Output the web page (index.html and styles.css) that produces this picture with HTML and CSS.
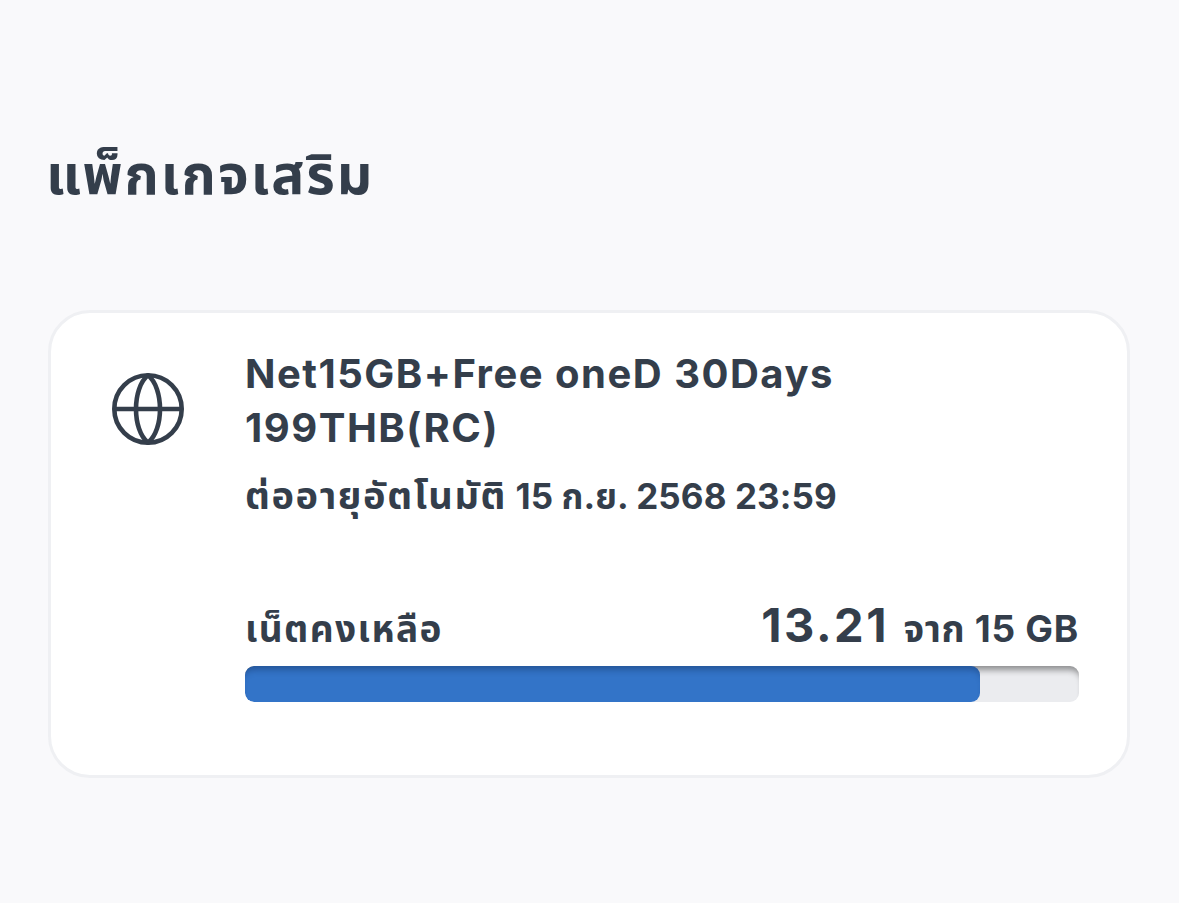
FILE: index.html
```html
<!DOCTYPE html>
<html lang="th">
<head>
<meta charset="utf-8">
<title>แพ็กเกจเสริม</title>
<link rel="stylesheet" href="styles.css">
</head>
<body>
<main class="page">
  <h1 class="title">แพ็กเกจเสริม</h1>
  <section class="card">
    <div class="icon-col">
      <svg class="globe" viewBox="0 0 72 72" fill="none" stroke="#343e4b" stroke-width="4.6">
        <circle cx="36" cy="36" r="33.7"/>
        <path d="M36 2.3C20 15 20 57 36 69.7C52 57 52 15 36 2.3Z"/>
        <path d="M2.3 36H69.7"/>
      </svg>
    </div>
    <div class="body">
      <h2 class="name">Net15GB+Free oneD 30Days 199THB(RC)</h2>
      <p class="renew"><span class="thai">ต่ออายุอัตโนมัติ</span> 15 ก.ย. 2568 23:59</p>
      <div class="usage">
        <span class="usage-label">เน็ตคงเหลือ</span>
        <span class="usage-value"><b class="big">13.21</b> จาก 15 GB</span>
      </div>
      <div class="bar"><div class="fill" style="width:88.1%"></div></div>
    </div>
  </section>
</main>
</body>
</html>
```
FILE: styles.css
```css
* { box-sizing: border-box; }
html, body { margin: 0; height: 100%; }
body {
  background: #f9f9fb;
  color: #343e4b;
  font-family: "Inter", "Noto Sans", "Noto Sans Thai", "DejaVu Sans", sans-serif;
}
.page { padding: 138px 48px 0; }
.title { margin: 0 0 0 -2px; font-size: 55px; line-height: 72px; font-weight: 700; letter-spacing: 2px; }
.card {
  margin-top: 100px;
  width: 1082px;
  height: 468px;
  background: #fff;
  border: 3px solid #eff0f3;
  border-radius: 42px;
  display: flex;
  padding: 34px 48px 0 61px;
}
.icon-col { width: 133px; flex: none; padding-top: 26px; }
.globe { width: 72px; height: 72px; display: block; }
.body { flex: 1; min-width: 0; }
.name { margin: 0; font-size: 40px; line-height: 54px; font-weight: 700; letter-spacing: 1.5px; max-width: 640px; }
.renew { margin: 16px 0 0; font-size: 35px; line-height: 48px; font-weight: 700; letter-spacing: 0.1px; }
.thai { font-size: 38px; letter-spacing: 1.6px; }
.usage { display: flex; justify-content: space-between; align-items: baseline; margin-top: 76px; height: 58px; }
.usage-label { font-size: 37px; font-weight: 700; letter-spacing: 1.4px; }
.usage-value { font-size: 37px; font-weight: 700; letter-spacing: 0.7px; }
.big { font-size: 47px; font-weight: 700; letter-spacing: 2.5px; margin-right: 5px; }
.bar { margin-top: 12px; height: 36px; background: #ebecef; border-radius: 9px; overflow: hidden; box-shadow: inset 0 8px 6px -4px rgba(0,0,0,.4); }
.fill { height: 100%; background: #3374c8; border-radius: 9px; box-shadow: inset 0 8px 6px -4px rgba(20,50,100,.45); }
```
